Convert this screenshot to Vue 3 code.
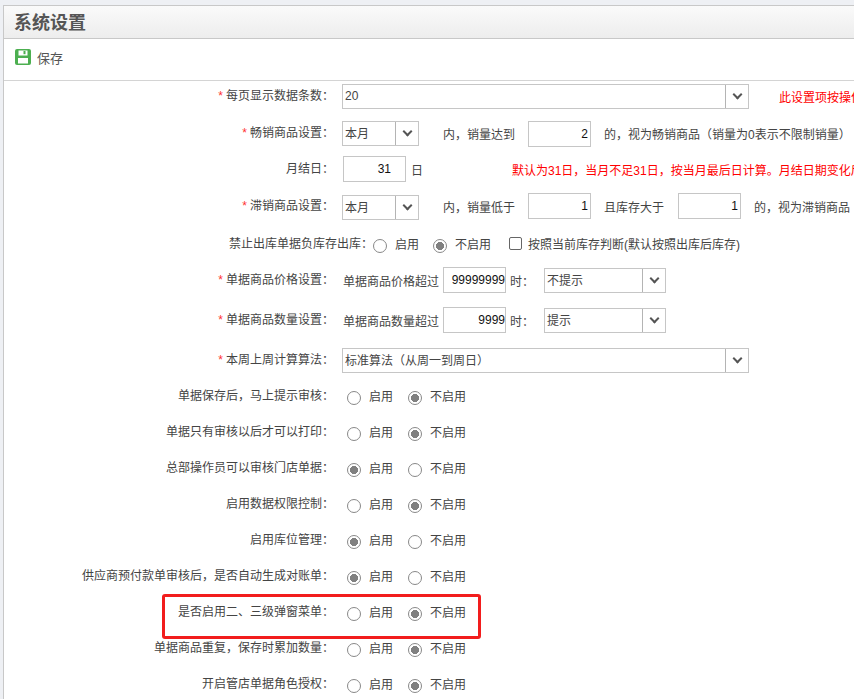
<script setup>
const switchRows = [
  { label: '单据保存后，马上提示审核', on: false },
  { label: '单据只有审核以后才可以打印', on: false },
  { label: '总部操作员可以审核门店单据', on: true },
  { label: '启用数据权限控制', on: false },
  { label: '启用库位管理', on: true },
  { label: '供应商预付款单审核后，是否自动生成对账单', on: true },
  { label: '是否启用二、三级弹窗菜单', on: false, marked: true },
  { label: '单据商品重复，保存时累加数量', on: false },
  { label: '开启管店单据角色授权', on: false },
]
</script>

<template>
  <div class="page">
    <div class="panel">
      <div class="title">系统设置</div>
      <div class="toolbar">
        <svg class="save-icon" width="16" height="16" viewBox="0 0 16 16">
          <rect x="0" y="0" width="16" height="16" rx="2" fill="#4caf50" />
          <rect x="3.5" y="1.5" width="9" height="5" fill="#fff" />
          <rect x="8.5" y="2" width="2" height="3.2" fill="#4caf50" />
          <rect x="3" y="9" width="10" height="5.5" fill="#fff" />
        </svg>
        <span>保存</span>
      </div>

      <div class="form">
        <div class="row">
          <div class="label"><i>*</i>每页显示数据条数：</div>
          <div class="select w407"><span>20</span><b class="arrow"></b></div>
          <span class="red note-first">此设置项按操作员设置</span>
        </div>

        <div class="row mt11">
          <div class="label"><i>*</i>畅销商品设置：</div>
          <div class="select w77"><span>本月</span><b class="arrow"></b></div>
          <span class="txt ml24">内，销量达到</span>
          <input class="num w63 ml13 low" value="2" readonly>
          <span class="txt ml13">的，视为畅销商品（销量为0表示不限制销量）</span>
        </div>

        <div class="row">
          <div class="label">月结日：</div>
          <input class="num w63 ml1 pad-31" value="31" readonly>
          <span class="txt ml5">日</span>
          <span class="red note-day">默认为31日，当月不足31日，按当月最后日计算。月结日期变化后，请重新核对数据</span>
        </div>

        <div class="row mt11">
          <div class="label"><i>*</i>滞销商品设置：</div>
          <div class="select w77 low"><span>本月</span><b class="arrow"></b></div>
          <span class="txt ml24">内，销量低于</span>
          <input class="num w63 ml13" value="1" readonly>
          <span class="txt ml13">且库存大于</span>
          <input class="num w63 ml14" value="1" readonly>
          <span class="txt ml13">的，视为滞销商品</span>
        </div>

        <div class="row mt12">
          <div class="label wide">禁止出库单据负库存出库：</div>
          <label class="radio flush"><input type="radio" name="stock"><span>启用</span></label>
          <label class="radio near"><input type="radio" name="stock" checked><span>不启用</span></label>
          <label class="check"><input type="checkbox"><span>按照当前库存判断(默认按照出库后库存)</span></label>
        </div>

        <div class="row">
          <div class="label"><i>*</i>单据商品价格设置：</div>
          <span class="txt ml1">单据商品价格超过</span>
          <input class="num w63 ml4 tight" value="99999999" readonly>
          <span class="txt ml4">时：</span>
          <div class="select w121 ml10"><span>不提示</span><b class="arrow"></b></div>
        </div>

        <div class="row mt14">
          <div class="label"><i>*</i>单据商品数量设置：</div>
          <span class="txt ml1">单据商品数量超过</span>
          <input class="num w63 ml4 tight" value="9999" readonly>
          <span class="txt ml4">时：</span>
          <div class="select w121 ml10"><span>提示</span><b class="arrow"></b></div>
        </div>

        <div class="row mt14">
          <div class="label"><i>*</i>本周上周计算算法：</div>
          <div class="select w407"><span>标准算法（从周一到周日）</span><b class="arrow"></b></div>
        </div>

        <div v-for="(item, i) in switchRows" :key="item.label" class="row">
          <div class="label">{{ item.label }}：</div>
          <label class="radio first"><input type="radio" :name="'sw' + i" :checked="item.on"><span>启用</span></label>
          <label class="radio"><input type="radio" :name="'sw' + i" :checked="!item.on"><span>不启用</span></label>
          <div v-if="item.marked" class="mark"></div>
        </div>
      </div>
    </div>
  </div>
</template>

<style>
html, body {
  margin: 0;
  overflow: hidden;
  background: #eef0f4;
}
</style>

<style scoped>
.page {
  width: 854px;
  height: 699px;
  overflow: hidden;
  padding: 5px 0 0 3px;
  box-sizing: border-box;
  background: #eef0f4;
  font-family: "Liberation Sans", "Noto Sans CJK SC", sans-serif;
  font-size: 12px;
  color: #444;
}

.panel {
  height: 700px;
  background: #fff;
  border-left: 1px solid #c8c8c8;
  border-top: 1px solid #c8c8c8;
}

.title {
  height: 32px;
  line-height: 34px;
  padding-left: 10px;
  font-size: 18px;
  font-weight: bold;
  color: #555;
  background: linear-gradient(#fafafa, #ededed);
  border-bottom: 1px solid #c8c8c8;
}

.toolbar {
  height: 41px;
  display: flex;
  align-items: center;
  padding-left: 11px;
  gap: 6px;
  font-size: 13px;
  color: #555;
  border-bottom: 1px solid #d4d4d4;
}

.save-icon {
  flex: none;
  margin-top: -5px;
}

.toolbar span {
  margin-top: -4px;
}

.form {
  padding-top: 2px;
  width: 900px;
}

.row {
  position: relative;
  height: 26px;
  margin-top: 10px;
  display: flex;
  align-items: center;
  white-space: nowrap;
}

.row:first-child { margin-top: 0; }
.mt11 { margin-top: 11px; }
.mt12 { margin-top: 12px; }
.mt14 { margin-top: 14px; }

.label {
  width: 330px;
  flex: none;
  margin-right: 8px;
  text-align: right;
  line-height: 26px;
}

.label.wide {
  width: 369px;
  margin-right: 0;
}

.label i {
  color: #f33;
  font-style: normal;
  margin-right: 3px;
}

.select {
  height: 23px;
  flex: none;
  border: 1px solid #c6c6c6;
  display: flex;
  align-items: center;
  justify-content: space-between;
  padding-left: 2px;
  background: #fff;
}

.select span {
  margin-top: -1px;
}

.w407 { width: 403px; }
.w77 { width: 73px; }
.w121 { width: 118px; }

.arrow {
  width: 22px;
  height: 23px;
  flex: none;
  border-left: 1px solid #b4b4b4;
  position: relative;
}

.arrow::after {
  content: "";
  position: absolute;
  left: 8px;
  top: 6px;
  width: 5px;
  height: 5px;
  border-right: 2px solid #555;
  border-bottom: 2px solid #555;
  transform: rotate(45deg);
}

.num {
  height: 24px;
  flex: none;
  padding: 0 2px;
  border: 1px solid #c6c6c6;
  font: inherit;
  color: #111;
  text-align: right;
  outline: none;
}

.w63 { width: 57px; }
.pad-31 { padding-right: 14px; width: 45px; }
.tight { padding-right: 0; width: 59px; }
.low { margin-top: 2px; }

.ml1 { margin-left: 1px; }
.ml4 { margin-left: 4px; }
.ml5 { margin-left: 5px; }
.ml10 { margin-left: 10px; }
.ml13 { margin-left: 13px; }
.ml14 { margin-left: 14px; }
.ml24 { margin-left: 24px; }

.red { color: #f00; }
.note-first { margin-left: 30px; }
.note-day { margin-left: 89px; }

.radio {
  display: flex;
  align-items: center;
  margin-left: 15px;
}

.radio.first { margin-left: 5px; }
.radio.flush { margin-left: 0; }
.radio.near { margin-left: 14px; }

.radio input {
  appearance: none;
  width: 14px;
  height: 14px;
  margin: 3px 8px 0 0;
  border: 1px solid #888;
  border-radius: 50%;
  background: #fff;
  box-sizing: border-box;
}

.radio input:checked {
  background: radial-gradient(circle, #808080 0 3.8px, #fff 4.3px);
}

.radio span, .check span {
  margin-top: -1px;
}

.check {
  display: flex;
  align-items: center;
  margin-left: 18px;
}

.check input {
  appearance: none;
  width: 13px;
  height: 13px;
  margin: -2px 6px 0 0;
  border: 1px solid #666;
  border-radius: 2px;
  background: #fff;
}

.mark {
  position: absolute;
  left: 158px;
  top: -5px;
  width: 313px;
  height: 39px;
  border: 3px solid #f21d1d;
  border-radius: 3px;
}
</style>
